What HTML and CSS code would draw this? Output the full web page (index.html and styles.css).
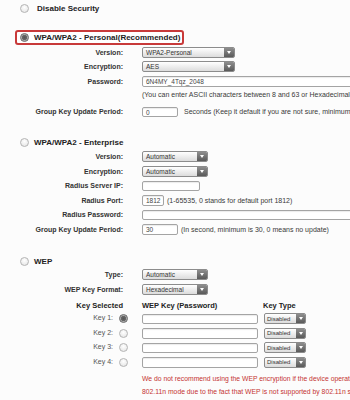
FILE: index.html
```html
<!DOCTYPE html>
<html>
<head>
  <meta charset="UTF-8">
  <title>Wireless Security</title>
  <meta name="viewport" content="width=device-width, initial-scale=1">
  <link rel="stylesheet" href="styles.css">
</head>
<body>

<div class="page">
  <!-- Disable -->
  <div class="mode mode-first">
    <span class="radio"></span>
    <span class="mode-title mode-title-wide">Disable Security</span>
  </div>

  <!-- WPA Personal -->
  <div class="mode mode-picked">
    <span class="radio radio-on"></span>
    <span class="mode-title">WPA/WPA2 - Personal(Recommended)</span>
  </div>
  <div class="row">
    <span class="label">Version:</span>
    <span class="select select-lg"><span class="select-text">WPA2-Personal</span><span class="select-arrow"></span></span>
  </div>
  <div class="row">
    <span class="label">Encryption:</span>
    <span class="select select-lg"><span class="select-text">AES</span><span class="select-arrow"></span></span>
  </div>
  <div class="row">
    <span class="label">Password:</span>
    <span class="input input-full">6N4MY_4Tqz_2048</span>
  </div>
  <div class="row row-hint">
    <span class="label"></span>
    <span class="note">(You can enter ASCII characters between 8 and 63 or Hexadecimal characters between 8 and 64.)</span>
  </div>
  <div class="row">
    <span class="label">Group Key Update Period:</span>
    <span class="input input-num">0</span>
    <span class="note note-gap">Seconds (Keep it default if you are not sure, minimum is 30, 0 means no update)</span>
  </div>

  <!-- WPA Enterprise -->
  <div class="mode mode-next">
    <span class="radio"></span>
    <span class="mode-title">WPA/WPA2 - Enterprise</span>
  </div>
  <div class="row">
    <span class="label">Version:</span>
    <span class="select select-sm"><span class="select-text">Automatic</span><span class="select-arrow"></span></span>
  </div>
  <div class="row">
    <span class="label">Encryption:</span>
    <span class="select select-sm"><span class="select-text">Automatic</span><span class="select-arrow"></span></span>
  </div>
  <div class="row">
    <span class="label">Radius Server IP:</span>
    <span class="input input-ip"></span>
  </div>
  <div class="row">
    <span class="label">Radius Port:</span>
    <span class="input input-port">1812</span>
    <span class="note note-near">(1-65535, 0 stands for default port 1812)</span>
  </div>
  <div class="row">
    <span class="label">Radius Password:</span>
    <span class="input input-full"></span>
  </div>
  <div class="row">
    <span class="label">Group Key Update Period:</span>
    <span class="input input-num">30</span>
    <span class="note note-near">(In second, minimum is 30, 0 means no update)</span>
  </div>

  <!-- WEP -->
  <div class="mode mode-next mode-wep">
    <span class="radio"></span>
    <span class="mode-title">WEP</span>
  </div>
  <div class="row">
    <span class="label">Type:</span>
    <span class="select select-sm"><span class="select-text">Automatic</span><span class="select-arrow"></span></span>
  </div>
  <div class="row">
    <span class="label">WEP Key Format:</span>
    <span class="select select-sm"><span class="select-text">Hexadecimal</span><span class="select-arrow"></span></span>
  </div>
  <div class="row row-head">
    <span class="label">Key Selected</span>
    <span class="col-key">WEP Key (Password)</span>
    <span class="col-type">Key Type</span>
  </div>
  <div class="row">
    <span class="label label-key">Key 1: <span class="radio radio-on radio-key"></span></span>
    <span class="input input-key"></span>
    <span class="select select-xs"><span class="select-text">Disabled</span><span class="select-arrow"></span></span>
  </div>
  <div class="row">
    <span class="label label-key">Key 2: <span class="radio radio-key"></span></span>
    <span class="input input-key"></span>
    <span class="select select-xs"><span class="select-text">Disabled</span><span class="select-arrow"></span></span>
  </div>
  <div class="row">
    <span class="label label-key">Key 3: <span class="radio radio-key"></span></span>
    <span class="input input-key"></span>
    <span class="select select-xs"><span class="select-text">Disabled</span><span class="select-arrow"></span></span>
  </div>
  <div class="row">
    <span class="label label-key">Key 4: <span class="radio radio-key"></span></span>
    <span class="input input-key"></span>
    <span class="select select-xs"><span class="select-text">Disabled</span><span class="select-arrow"></span></span>
  </div>
  <p class="warning">We do not recommend using the WEP encryption if the device operates in<br>802.11n mode due to the fact that WEP is not supported by 802.11n specification.</p>
</div>

</body>
</html>
```

FILE: styles.css
```css
/* Page */
html, body {
  overflow: hidden;
}
body {
  margin: 0;
  background: #fcfcfc;
  font-family: "Liberation Sans", Arial, sans-serif;
  color: #333;
}
.page {
  width: 350px;
  white-space: nowrap;
}

/* Security mode headings */
.mode {
  display: flex;
  align-items: center;
  height: 15px;
  padding-left: 20px;
  font-size: 8px;
  font-weight: bold;
  color: #222;
}
.mode-first {
  margin-top: 1px;
  height: 14px;
}
.mode-picked {
  margin: 15px 0 0 15px;
  width: 169px;
  box-sizing: border-box;
  height: 15px;
  padding-left: 3px;
  border: 2px solid #c83a3a;
  border-radius: 3px;
  background: #fff;
}
.mode-next {
  margin-top: 15.5px;
}
.mode-wep {
  margin-top: 17.5px;
  margin-bottom: -1.5px;
}
.mode-title {
  margin-left: 5px;
}
.mode-title-wide {
  margin-left: 8px;
}

/* Radio buttons */
.radio {
  display: inline-block;
  width: 9px;
  height: 9px;
  box-sizing: border-box;
  border: 1px solid #b4b4b4;
  border-radius: 50%;
  background: radial-gradient(circle at 50% 35%, #fff, #e2e2e2);
  flex: none;
}
.radio-on {
  border-color: #666;
  background: radial-gradient(circle, #555 0, #666 45%, #aaa 60%, #e8e8e8 100%);
}
.radio-key {
  vertical-align: middle;
  margin-left: 4px;
  margin-right: -5px;
}

/* Form rows */
.row {
  display: flex;
  align-items: center;
  height: 14.5px;
  font-size: 7px;
}
.row-hint {
  height: 11px;
  margin-bottom: 5px;
}
.row-head {
  height: 15px;
  margin-top: 1px;
  margin-bottom: -1px;
  font-size: 7.5px;
  font-weight: bold;
  color: #222;
}
.label {
  flex: none;
  width: 123px;
  margin-right: 19px;
  text-align: right;
  font-weight: bold;
  color: #333;
}
.label-key {
  font-weight: normal;
  color: #555;
}
.row-head .label {
  color: #222;
}
.col-key {
  width: 121px;
}
.note {
  color: #3a3a3a;
}
.note-gap {
  margin-left: 6px;
}
.note-near {
  margin-left: 3px;
}

/* Inputs */
.input {
  flex: none;
  display: inline-block;
  box-sizing: border-box;
  height: 10.5px;
  line-height: 9px;
  padding-left: 3px;
  border: 1px solid #a4a4a4;
  border-radius: 2px;
  background: #fff;
  box-shadow: inset 0 1px 1px rgba(0,0,0,0.08);
  font-size: 6.5px;
  color: #444;
}
.input-full { width: 230px; }
.input-num { width: 36px; }
.input-ip { width: 58px; }
.input-port { width: 22px; }
.input-key { width: 116px; }

/* Drop-down selects */
.select {
  flex: none;
  display: inline-flex;
  align-items: center;
  box-sizing: border-box;
  height: 11px;
  border: 1px solid #8c8c8c;
  border-radius: 2px;
  background: linear-gradient(#ffffff, #dcdcdc);
  font-size: 6.5px;
  color: #333;
  overflow: hidden;
}
.select-text {
  flex: 1;
  padding-left: 3px;
}
.select-arrow {
  align-self: stretch;
  width: 10px;
  display: flex;
  align-items: center;
  justify-content: center;
  background: linear-gradient(#8e8e8e, #5a5a5a);
}
.select-arrow::after {
  content: "";
  border-left: 2.5px solid transparent;
  border-right: 2.5px solid transparent;
  border-top: 3px solid #fff;
}
.select-lg { width: 93px; }
.select-sm { width: 66px; }
.select-xs {
  width: 42px;
  margin-left: 6px;
  font-size: 6px;
}
.select-xs .select-text {
  padding-left: 2px;
}
.select-xs .select-arrow {
  width: 9px;
}

/* Warning */
.warning {
  margin: 2.5px 0 0 142px;
  font-size: 6.8px;
  line-height: 13px;
  color: #c43333;
}
```
